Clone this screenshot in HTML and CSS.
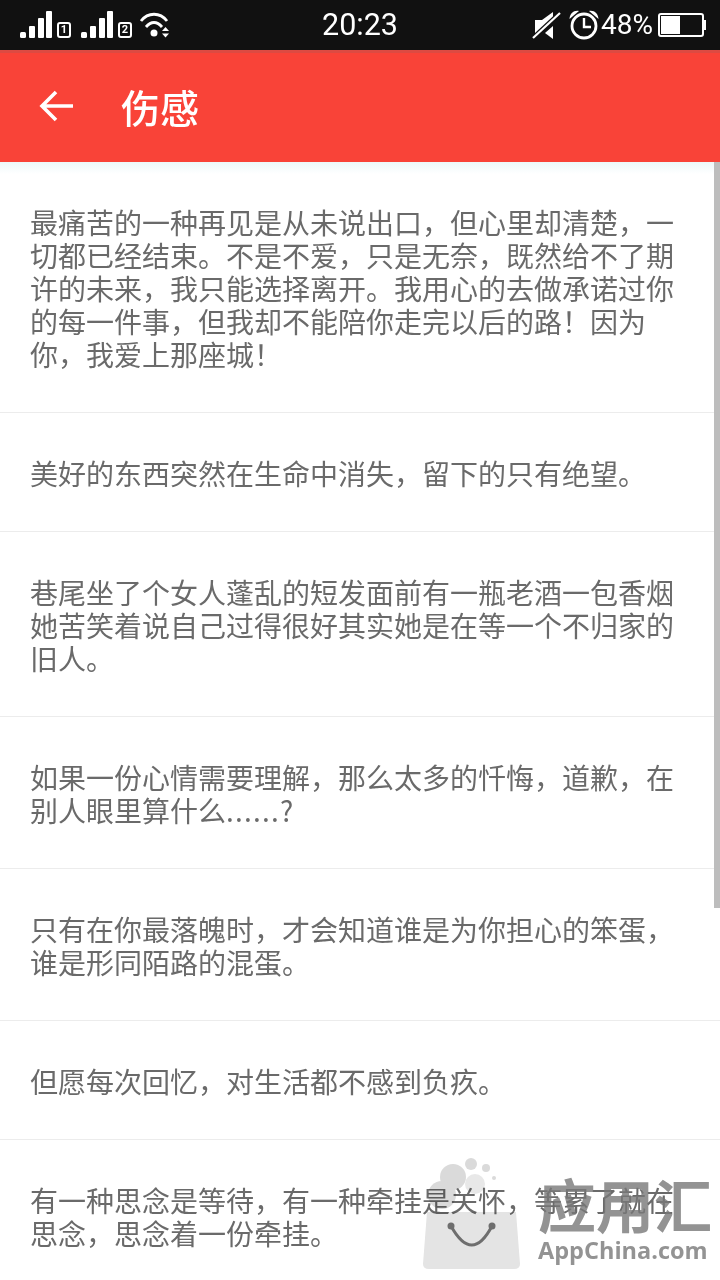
FILE: index.html
```
<!DOCTYPE html>
<html lang="zh-CN">
<head>
<meta charset="utf-8">
<title>伤感</title>
<link rel="stylesheet" href="styles.css">
</head>
<body>
<div class="app">
  <div class="statusbar">
    <div class="status-left">
      <svg class="sig" width="32" height="27" viewBox="0 0 32 27"><g fill="#fff"><rect x="0" y="21" width="6" height="6" rx="1.500"/><rect x="9" y="15" width="6" height="12" rx="1"/><rect x="18" y="7" width="6" height="20" rx="1"/><rect x="26" y="0" width="6" height="27" rx="1"/></g></svg>
      <span class="simno">1</span>
      <svg class="sig" width="32" height="27" viewBox="0 0 32 27"><g fill="#fff"><rect x="0" y="21" width="6" height="6" rx="1.500"/><rect x="9" y="15" width="6" height="12" rx="1"/><rect x="18" y="7" width="6" height="20" rx="1"/><rect x="26" y="0" width="6" height="27" rx="1"/></g></svg>
      <span class="simno">2</span>
      <svg class="wifi" width="32" height="26" viewBox="0 0 32 26"><g fill="none" stroke="#fff" stroke-width="2.800"><path d="M2 9C9 0 21 0 28 9"/><path d="M7 15C12 9 18 9 23 15"/></g><circle cx="15" cy="21" r="3.500" fill="#fff"/><path d="M23 19l3.500-4 3.500 4zM23 21.500h7l-3.500 4z" fill="#fff"/></svg>
    </div>
    <div class="time">20:23</div>
    <div class="status-right">
      <svg class="mute" width="30" height="28" viewBox="0 0 30 28"><path d="M3 9h7l11-8v9L8 22H3z" fill="#fff"/><path d="M13 22l8-7v13z" fill="#fff"/><path d="M1 27L28 2" stroke="#111" stroke-width="4.500"/><path d="M1 27L28 2" stroke="#fff" stroke-width="2.200"/></svg>
      <svg class="alarm" width="30" height="30" viewBox="0 0 30 30"><circle cx="15" cy="16" r="12" fill="none" stroke="#fff" stroke-width="2.800"/><path d="M15 8v9h7" fill="none" stroke="#fff" stroke-width="2.400"/><path d="M0.500 9C1 3 5 0 10 1zM29.500 9C29 3 25 0 20 1z" fill="#fff"/></svg>
      <span class="pct">48%</span>
      <div class="battery"><div class="battery-fill"></div></div>
      <div class="battery-tip"></div>
    </div>
  </div>

  <header class="appbar">
    <svg class="back" width="36" height="36" viewBox="0 0 36 36"><path d="M34 18H4M17 4L3 18l14 14" fill="none" stroke="#fff" stroke-width="3.600"/></svg>
    <h1 class="title">伤感</h1>
  </header>

  <main class="list">
    <div class="sheen"></div>
    <div class="item">最痛苦的一种再见是从未说出口&#xFF0C;但心里却清楚&#xFF0C;一切都已经结束。不是不爱&#xFF0C;只是无奈&#xFF0C;既然给不了期许的未来&#xFF0C;我只能选择离开。我用心的去做承诺过你的每一件事&#xFF0C;但我却不能陪你走完以后的路&#xFF01;因为你&#xFF0C;我爱上那座城&#xFF01;</div>
    <div class="item">美好的东西突然在生命中消失&#xFF0C;留下的只有绝望。</div>
    <div class="item">巷尾坐了个女人蓬乱的短发面前有一瓶老酒一包香烟她苦笑着说自己过得很好其实她是在等一个不归家的旧人。</div>
    <div class="item">如果一份心情需要理解&#xFF0C;那么太多的忏悔&#xFF0C;道歉&#xFF0C;在别人眼里算什么<span class="dots">......</span>?</div>
    <div class="item">只有在你最落魄时&#xFF0C;才会知道谁是为你担心的笨蛋&#xFF0C;谁是形同陌路的混蛋。</div>
    <div class="item">但愿每次回忆&#xFF0C;对生活都不感到负疚。</div>
    <div class="item">有一种思念是等待&#xFF0C;有一种牵挂是关怀&#xFF0C;等累了就在思念&#xFF0C;思念着一份牵挂。</div>
    <div class="scrollbar"></div>
  </main>

  <div class="watermark">
    <svg class="wm-bag" width="108" height="112" viewBox="0 0 108 112"><g fill="#dadada"><circle cx="35" cy="19" r="13"/><circle cx="53" cy="6" r="6"/><circle cx="68" cy="10" r="4"/><circle cx="76" cy="20" r="2"/><circle cx="24" cy="37" r="14"/><circle cx="57" cy="26" r="10" fill="#e8e8e8"/></g><path d="M9 54H98L102 106Q102 111 96 111H11Q5 111 5 106z" fill="#e4e4e4"/><path d="M33 68Q54 106 74 68" fill="none" stroke="#6e6e6e" stroke-width="3" stroke-linecap="round"/><circle cx="33" cy="68" r="3.500" fill="#6e6e6e"/><circle cx="74" cy="68" r="3.500" fill="#6e6e6e"/></svg>
    <div class="wm-text">
      <div class="wm-cn">应用汇</div>
      <div class="wm-en">AppChina.com</div>
    </div>
  </div>
</div>
</body>
</html>
```
FILE: styles.css
```
* { box-sizing: border-box; }
html, body { margin: 0; padding: 0; }
body { background: #fff; font-family: "Noto Sans CJK SC", "Noto Sans", sans-serif; }
.app { position: relative; width: 720px; height: 1280px; overflow: hidden; display: flex; flex-direction: column; }

.statusbar { height: 50px; flex: none; background: #111; color: #fff; display: grid; grid-template-columns: 1fr auto 1fr; align-items: center; font-family: Roboto, sans-serif; }
.status-left { display: flex; align-items: flex-end; height: 50px; padding: 0 0 12px 20px; }
.sig { display: block; }
.simno { width: 14px; height: 16px; margin: 0 10px 0 5px; border: 2px solid #fff; border-radius: 3px; font-size: 11px; line-height: 12px; font-weight: 700; text-align: center; }
.wifi { display: block; margin-left: -3px; }
.time { font-size: 30.5px; line-height: 50px; }
.status-right { display: flex; align-items: center; justify-content: flex-end; padding-right: 14px; }
.mute { margin-right: 7px; }
.alarm { margin-right: 2px; }
.pct { font-size: 28px; line-height: 50px; margin-right: 5px; }
.battery { width: 46px; height: 24px; border: 2px solid #fff; border-radius: 3px; padding: 1px; }
.battery-fill { width: 19px; height: 100%; background: #fff; }
.battery-tip { width: 2px; height: 10px; background: #fff; }

.appbar { height: 112px; flex: none; background: #f94338; border-top: 3px solid #dd4a42; display: flex; align-items: center; padding: 0 0 3px 39px; }
.back { display: block; }
.title { margin: 0 0 0 46px; font-size: 39px; line-height: 50px; font-weight: 500; color: #fff; }

.list { position: relative; flex: 1; min-height: 0; }
.sheen { position: absolute; left: 0; right: 0; top: 0; height: 12px; background: linear-gradient(#edf8f9, #fff); }
.item { position: relative; padding: 44px 46px 41px 30px; font-size: 28px; line-height: 33px; color: #6a6a6a; border-bottom: 1px solid #ececec; }
.dots { letter-spacing: 1.2px; }
.scrollbar { position: absolute; top: 0; right: 0; width: 6px; height: 746px; background: #bdbdbd; }

.watermark { position: absolute; left: 418px; top: 1158px; display: flex; pointer-events: none; }
.wm-bag { display: block; mix-blend-mode: multiply; }
.wm-text { margin-left: 12px; margin-top: 14px; color: rgba(120, 120, 120, 0.8); font-weight: 700; }
.wm-cn { font-size: 58px; line-height: 62px; }
.wm-en { font-family: "Open Sans", sans-serif; font-size: 23.500px; line-height: 30px; margin-top: 1px; }
```
